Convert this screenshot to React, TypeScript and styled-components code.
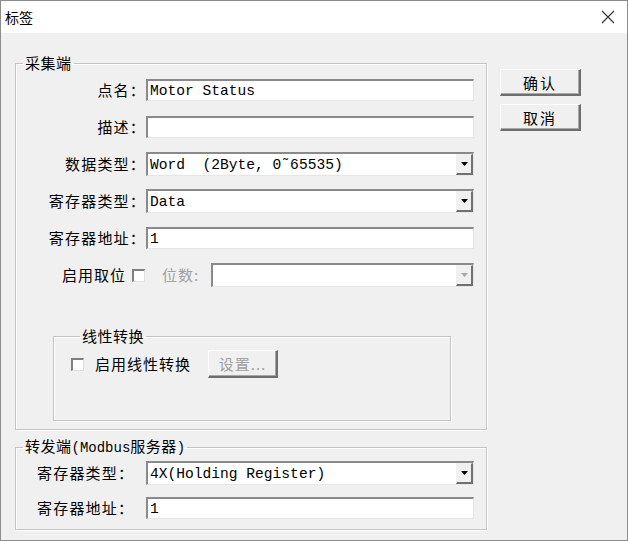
import React from "react";
import styled, { createGlobalStyle } from "styled-components";

const Global = createGlobalStyle`
  html, body { margin: 0; padding: 0; background: #f0f0f0; }
  * { box-sizing: border-box; }
`;

const CJK = `"Noto Sans CJK SC", "Noto Sans", sans-serif`;
const MONO = `"Liberation Mono", "DejaVu Sans Mono", monospace`;

const Window = styled.div`
  width: 628px;
  height: 541px;
  border: 1px solid #8c8c8c;
  background: #f0f0f0;
  display: flex;
  flex-direction: column;
  font-family: ${CJK};
  font-size: 15px;
  color: #000;
`;

const TitleBar = styled.div`
  height: 32px;
  background: #fff;
  display: flex;
  align-items: center;
  justify-content: space-between;
  padding: 0 12px 0 4px;
  flex-shrink: 0;
`;

const Title = styled.span`
  font-size: 14px;
  line-height: 16px;
`;

const Body = styled.div`
  flex: 1;
  display: flex;
  gap: 13px;
  padding: 22px 0 0 14px;
`;

const LeftCol = styled.div`
  width: 472px;
  display: flex;
  flex-direction: column;
  gap: 8px;
`;

const Group = styled.fieldset<{ $pad: string }>`
  margin: 0;
  padding: ${(p) => p.$pad};
  border: 1px solid #c4c4c4;
  box-shadow: inset 1px 1px 0 #fff, 1px 1px 0 #fff;
  min-width: 0;
`;

const Legend = styled.legend<{ $ml: number }>`
  margin-left: ${(p) => p.$ml}px;
  padding: 0 2px;
  font-size: 15px;
  line-height: 16px;
  letter-spacing: 0.5px;
  white-space: pre;
`;

const MonoInLegend = styled.span`
  font-family: ${MONO};
  font-size: 14px;
  letter-spacing: 0;
`;

const FormGrid = styled.div<{ $cols: string; $gap: number; $pl?: number }>`
  display: grid;
  grid-template-columns: ${(p) => p.$cols};
  row-gap: ${(p) => p.$gap}px;
  align-items: center;
  padding-left: ${(p) => p.$pl || 0}px;
`;

const Label = styled.span<{ $align?: string }>`
  text-align: ${(p) => p.$align || "right"};
  line-height: 24px;
  letter-spacing: 1.2px;
  white-space: nowrap;
`;

const Field = styled.div<{ $h?: number; $w?: number }>`
  height: ${(p) => p.$h || 22}px;
  width: ${(p) => (p.$w ? `${p.$w}px` : "auto")};
  background: #fff;
  border-top: 2px solid #8a8a8a;
  border-left: 2px solid #8a8a8a;
  border-bottom: 1px solid #e6e6e6;
  border-right: 1px solid #e6e6e6;
  display: flex;
  align-items: center;
  font-family: ${MONO};
  font-size: 14.6px;
  white-space: pre;
  padding-left: 2px;
  overflow: hidden;
  flex-shrink: 0;
`;

const FieldText = styled.span`
  flex: 1;
  line-height: 18px;
`;

const DropBtn = styled.div<{ $disabled?: boolean }>`
  width: 17px;
  height: 100%;
  background: #f0f0f0;
  border-top: 1px solid #f0f0f0;
  border-left: 1px solid #f0f0f0;
  border-right: 2px solid #707070;
  border-bottom: 2px solid #707070;
  display: flex;
  align-items: center;
  justify-content: center;
  flex-shrink: 0;
  svg path { fill: ${(p) => (p.$disabled ? "#a8a8a8" : "#000")}; }
`;

const BitRow = styled.div`
  grid-column: 1 / span 2;
  display: flex;
  align-items: center;
  height: 24px;
  padding-left: 46px;
`;

const Check = styled.span`
  width: 13px;
  height: 13px;
  background: #fff;
  border-top: 2px solid #808080;
  border-left: 2px solid #808080;
  border-bottom: 1px solid #e0e0e0;
  border-right: 1px solid #e0e0e0;
  flex-shrink: 0;
`;

const DimText = styled.span<{ $ml: number }>`
  color: #a0a0a0;
  margin-left: ${(p) => p.$ml}px;
  line-height: 24px;
  letter-spacing: 1px;
  white-space: nowrap;
  flex-shrink: 0;
`;

const PlainText = styled.span<{ $ml: number }>`
  margin-left: ${(p) => p.$ml}px;
  line-height: 24px;
  letter-spacing: 1px;
  white-space: nowrap;
  flex-shrink: 0;
`;

const Spacer = styled.div<{ $w: number }>`
  width: ${(p) => p.$w}px;
  flex-shrink: 0;
`;

const InnerGroupWrap = styled.div`
  padding: 41px 0 0 37px;
`;

const InnerRow = styled.div`
  display: flex;
  align-items: center;
  height: 28px;
`;

const Button = styled.div<{ $w: number; $h: number; $disabled?: boolean }>`
  width: ${(p) => p.$w}px;
  height: ${(p) => p.$h}px;
  background: #f0f0f0;
  border-top: 1px solid #fff;
  border-left: 1px solid #fff;
  border-right: 2px solid #6e6e6e;
  border-bottom: 2px solid #6e6e6e;
  box-shadow: inset -1px -1px 0 #a8a8a8;
  display: flex;
  align-items: center;
  justify-content: center;
  font-size: 15px;
  color: ${(p) => (p.$disabled ? "#a0a0a0" : "#000")};
  letter-spacing: ${(p) => (p.$disabled ? "1px" : "2px")};
  flex-shrink: 0;
`;

const RightCol = styled.div`
  display: flex;
  flex-direction: column;
  gap: 8px;
  padding-top: 14px;
`;

const Arrow = () => (
  <svg width="7" height="4" viewBox="0 0 7 4">
    <path d="M0 0h7L3.5 4z" />
  </svg>
);

const Select = ({ text, disabled, w }: { text: string; disabled?: boolean; w?: number }) => (
  <Field $h={24} $w={w}>
    <FieldText>{text}</FieldText>
    <DropBtn $disabled={disabled}>
      <Arrow />
    </DropBtn>
  </Field>
);

export default function App() {
  return (
    <Window>
      <Global />
      <TitleBar>
        <Title>标签</Title>
        <svg width="14" height="14" viewBox="0 0 14 14">
          <path d="M1 1L13 13M13 1L1 13" stroke="#333" strokeWidth="1.1" fill="none" />
        </svg>
      </TitleBar>
      <Body>
        <LeftCol>
          <Group $pad="7px 12px 8px 0">
            <Legend $ml={7}>采集端</Legend>
            <FormGrid $cols="130px 328px" $gap={13}>
              <Label>点名：</Label>
              <Field>
                <FieldText>Motor Status</FieldText>
              </Field>
              <Label>描述：</Label>
              <Field>
                <FieldText />
              </Field>
              <Label>数据类型：</Label>
              <Select text={"Word  (2Byte, 0\u02dc65535)"} />
              <Label>寄存器类型：</Label>
              <Select text="Data" />
              <Label>寄存器地址：</Label>
              <Field>
                <FieldText>1</FieldText>
              </Field>
              <BitRow>
                <PlainText $ml={0}>启用取位</PlainText>
                <Spacer $w={6} />
                <Check />
                <DimText $ml={17}>位数:</DimText>
                <Spacer $w={12} />
                <Select text="" disabled w={263} />
              </BitRow>
            </FormGrid>
            <InnerGroupWrap>
              <Group $pad="6px 0 42px 17px" style={{ width: 398 }}>
                <Legend $ml={9}>线性转换</Legend>
                <InnerRow>
                  <Check />
                  <PlainText $ml={11}>启用线性转换</PlainText>
                  <Spacer $w={17} />
                  <Button $w={70} $h={28} $disabled>
                    设置...
                  </Button>
                </InnerRow>
              </Group>
            </InnerGroupWrap>
          </Group>
          <Group $pad="5px 12px 9px 0">
            <Legend $ml={7}>
              转发端<MonoInLegend>(Modbus</MonoInLegend>服务器<MonoInLegend>)</MonoInLegend>
            </Legend>
            <FormGrid $cols="109px 328px" $gap={11} $pl={21}>
              <Label $align="left">寄存器类型：</Label>
              <Select text="4X(Holding Register)" />
              <Label $align="left">寄存器地址：</Label>
              <Field>
                <FieldText>1</FieldText>
              </Field>
            </FormGrid>
          </Group>
        </LeftCol>
        <RightCol>
          <Button $w={81} $h={27}>确认</Button>
          <Button $w={81} $h={27}>取消</Button>
        </RightCol>
      </Body>
    </Window>
  );
}
